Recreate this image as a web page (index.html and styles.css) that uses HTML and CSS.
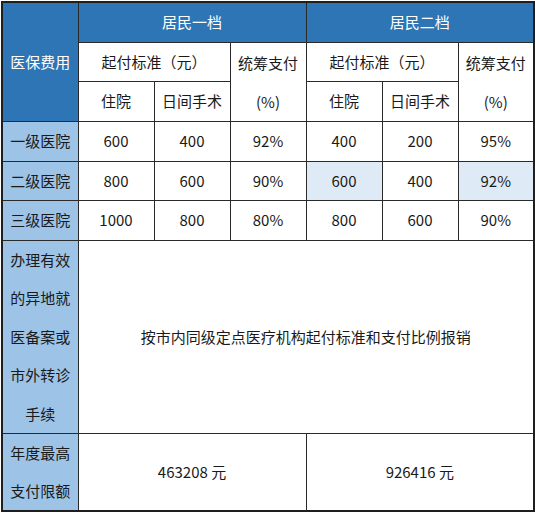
FILE: index.html
```html
<!DOCTYPE html>
<html lang="zh">
<head>
<meta charset="utf-8">
<link rel="stylesheet" href="styles.css">
</head>
<body>
<div class="wrap">
<table class="fee">
  <colgroup>
    <col class="c1"><col class="c2"><col class="c3"><col class="c4"><col class="c5"><col class="c6"><col class="c7">
  </colgroup>
  <tr class="r40">
    <th class="head side" rowspan="3">医保费用</th>
    <th class="head" colspan="3">居民一档</th>
    <th class="head" colspan="3">居民二档</th>
  </tr>
  <tr class="r39">
    <td colspan="2">起付标准（元）</td>
    <td rowspan="2" class="two">统筹支付<br>(%)</td>
    <td colspan="2">起付标准（元）</td>
    <td rowspan="2" class="two">统筹支付<br>(%)</td>
  </tr>
  <tr class="r40">
    <td>住院</td><td>日间手术</td>
    <td>住院</td><td>日间手术</td>
  </tr>
  <tr class="r40">
    <th class="side">一级医院</th>
    <td>600</td><td>400</td><td>92%</td>
    <td>400</td><td>200</td><td>95%</td>
  </tr>
  <tr class="r39">
    <th class="side">二级医院</th>
    <td>800</td><td>600</td><td>90%</td>
    <td class="hl">600</td><td>400</td><td class="hl">92%</td>
  </tr>
  <tr class="r40">
    <th class="side">三级医院</th>
    <td>1000</td><td>800</td><td>80%</td>
    <td>800</td><td>600</td><td>90%</td>
  </tr>
  <tr>
    <th class="side multi">办理有效<br>的异地就<br>医备案或<br>市外转诊<br>手续</th>
    <td colspan="6">按市内同级定点医疗机构起付标准和支付比例报销</td>
  </tr>
  <tr>
    <th class="side multi last">年度最高<br>支付限额</th>
    <td colspan="3">463208 元</td>
    <td colspan="3">926416 元</td>
  </tr>
</table>
</div>
</body>
</html>
```

FILE: styles.css
```css
html, body {
  margin: 0;
  padding: 0;
  background: #ffffff;
}
.wrap {
  padding: 1px 0 0 1px;
}
.fee {
  border-collapse: collapse;
  table-layout: fixed;
  width: 532px;
  border: 2px solid #1e1e1e;
  font-family: "Noto Sans CJK SC", "Noto Sans", sans-serif;
  font-size: 15px;
  color: #1a1a1a;
}
.fee col { width: 76px; }
.fee th, .fee td {
  border: 1px solid #2a2a2a;
  padding: 0;
  text-align: center;
  vertical-align: middle;
  font-weight: normal;
  line-height: 20px;
}
.r40 { height: 40px; }
.r39 { height: 39px; }
.fee .head {
  background: #2e75b6;
  color: #ffffff;
}
.fee .side {
  background: #9dc3e6;
  color: #1a1a1a;
}
.fee .head.side {
  background: #2e75b6;
  color: #ffffff;
}
.fee .two {
  line-height: 39px;
}
.fee .multi {
  line-height: 38.6px;
}
.fee .last {
  line-height: 38px;
}
.fee .hl {
  background: #deebf7;
}
```
